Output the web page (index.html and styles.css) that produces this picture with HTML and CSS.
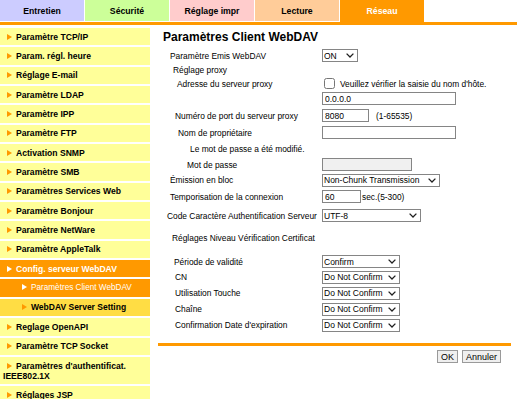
FILE: index.html
```html
<!DOCTYPE html>
<html lang="fr">
<head>
    <meta charset="UTF-8">
    <title>Paramètres Client WebDAV</title>
    <link rel="stylesheet" href="styles.css">
</head>
<body>
    <div class="tabs">
        <div class="tab tab-maint">Entretien</div>
        <div class="tab tab-sec">Sécurité</div>
        <div class="tab tab-print">Réglage impr</div>
        <div class="tab tab-read">Lecture</div>
        <div class="tab tab-active">Réseau</div>
    </div>
    <div class="tabline"></div>

    <div class="layout">
        <nav class="side">
            <div class="item">Paramètre TCP/IP</div>
            <div class="item">Param. régl. heure</div>
            <div class="item">Réglage E-mail</div>
            <div class="item">Paramètre LDAP</div>
            <div class="item">Paramètre IPP</div>
            <div class="item">Paramètre FTP</div>
            <div class="item">Activation SNMP</div>
            <div class="item">Paramètre SMB</div>
            <div class="item">Paramètres Services Web</div>
            <div class="item">Paramètre Bonjour</div>
            <div class="item">Paramètre NetWare</div>
            <div class="item">Paramètre AppleTalk</div>
            <div class="item item-open">Config. serveur WebDAV</div>
            <div class="item sub sub-current">Paramètres Client WebDAV</div>
            <div class="item sub sub-other">WebDAV Server Setting</div>
            <div class="item">Reglage OpenAPI</div>
            <div class="item">Paramètre TCP Socket</div>
            <div class="item">Paramètres d'authentificat.<br>IEEE802.1X</div>
            <div class="item">Réglages JSP</div>
        </nav>

        <main class="content">
            <h1>Paramètres Client WebDAV</h1>
            <div class="form">
                <div class="row h15">
                    <span class="label i5">Paramètre Emis WebDAV</span>
                    <span class="field"><select class="w36"><option>ON</option></select></span>
                </div>
                <div class="row h14">
                    <span class="label i8">Réglage proxy</span>
                </div>
                <div class="row h13">
                    <span class="label i12">Adresse du serveur proxy</span>
                    <span class="field"><input type="checkbox" class="check"> Veuillez vérifier la saisie du nom d'hôte.</span>
                </div>
                <div class="row h17">
                    <span class="label"></span>
                    <span class="field"><input type="text" class="w134" value="0.0.0.0"></span>
                </div>
                <div class="row h17">
                    <span class="label i10">Numéro de port du serveur proxy</span>
                    <span class="field"><input type="text" class="w47" value="8080"><span class="note">(1-65535)</span></span>
                </div>
                <div class="row h17">
                    <span class="label i13">Nom de propriétaire</span>
                    <span class="field"><input type="text" class="w134" value=""></span>
                </div>
                <div class="row h16">
                    <span class="label i25 wide">Le mot de passe a été modifié.</span>
                </div>
                <div class="row h15">
                    <span class="label i22">Mot de passe</span>
                    <span class="field"><input type="password" class="w90" disabled></span>
                </div>
                <div class="row h16">
                    <span class="label i5">Émission en bloc</span>
                    <span class="field"><select class="w118"><option>Non-Chunk Transmission</option></select></span>
                </div>
                <div class="row h17">
                    <span class="label i5">Temporisation de la connexion</span>
                    <span class="field"><input type="text" class="w39" value="60"><span class="unit">sec.(5-300)</span></span>
                </div>
                <div class="row h21">
                    <span class="label i2">Code Caractère Authentification Serveur</span>
                    <span class="field"><select class="w99"><option>UTF-8</option></select></span>
                </div>
                <div class="row h24 gap-after">
                    <span class="label i7 wide">Réglages Niveau Vérification Certificat</span>
                </div>
                <div class="row h15">
                    <span class="label i9">Période de validité</span>
                    <span class="field"><select class="w78"><option>Confirm</option></select></span>
                </div>
                <div class="row h16">
                    <span class="label i10">CN</span>
                    <span class="field"><select class="w78"><option>Do Not Confirm</option></select></span>
                </div>
                <div class="row h16">
                    <span class="label i10">Utilisation Touche</span>
                    <span class="field"><select class="w78"><option>Do Not Confirm</option></select></span>
                </div>
                <div class="row h16">
                    <span class="label i10">Chaîne</span>
                    <span class="field"><select class="w78"><option>Do Not Confirm</option></select></span>
                </div>
                <div class="row h16">
                    <span class="label i10">Confirmation Date d'expiration</span>
                    <span class="field"><select class="w78"><option>Do Not Confirm</option></select></span>
                </div>
            </div>
            <div class="rule"></div>
            <div class="buttons">
                <button>OK</button>
                <button>Annuler</button>
            </div>
        </main>
    </div>
</body>
</html>
```

FILE: styles.css
```css
:root {
    --orange: #ff9900;
    --yellow: #ffff99;
    --gold: #ffdd44;
}
body {
    font-family: "Liberation Sans", Arial, sans-serif;
    color: #000;
    background-color: #fff;
    margin: 0;
    padding: 0;
}
.tabs {
    display: flex;
    gap: 1px;
    height: 22px;
}
.tab {
    width: 84px;
    height: 21px;
    display: flex;
    align-items: center;
    justify-content: center;
    font-size: 8.7px;
    font-weight: bold;
}
.tab-maint { background-color: #ccccff; }
.tab-sec { background-color: #ccff99; }
.tab-print { background-color: #ffcccc; }
.tab-read { background-color: #ffcc99; }
.tab-active {
    height: 22px;
    background-color: var(--orange);
    color: #fff;
}
.tabline {
    height: 3px;
    background-color: var(--orange);
}
.layout {
    display: flex;
    gap: 8px;
}
.side {
    width: 150px;
    flex-shrink: 0;
    margin-top: 3px;
    display: flex;
    flex-direction: column;
}
.item {
    background-color: var(--yellow);
    border-bottom: 2px solid #fff;
    padding: 3.675px 3px;
    line-height: 10px;
    font-size: 8.6px;
    font-weight: bold;
    white-space: nowrap;
}
.item::before {
    content: "";
    display: inline-block;
    border-left: 5px solid var(--orange);
    border-top: 3px solid transparent;
    border-bottom: 3px solid transparent;
    margin: 0 4px 0 4px;
    vertical-align: 0;
}
.item-open {
    background-color: var(--orange);
    color: #fff;
}
.item-open::before { border-left-color: #fff; }
.sub::before { margin-left: 19px; }
.sub-current {
    background-color: var(--orange);
    color: #fff;
    font-weight: normal;
    font-size: 8.2px;
}
.sub-current::before { border-left-color: #fff; }
.sub-other {
    background-color: var(--gold);
    font-size: 8.5px;
}
.content {
    width: 353px;
    padding-top: 5px;
}
.content h1 {
    margin: 0 0 4px 5px;
    font-size: 12px;
    line-height: 14px;
}
.form {
    display: flex;
    flex-direction: column;
    font-size: 8.4px;
}
.row {
    display: grid;
    grid-template-columns: 157px 1fr;
    align-items: center;
    padding-left: 7px;
    white-space: nowrap;
}
.h13 { height: 13px; }
.h14 { height: 14px; }
.h15 { height: 15px; }
.h16 { height: 16px; }
.h17 { height: 17px; }
.h21 { height: 21px; }
.h24 { height: 24px; }
.gap-after { margin-bottom: 4px; }
.label.wide { grid-column: 1 / 3; }
.i2 { padding-left: 2px; }
.i5 { padding-left: 5px; }
.i7 { padding-left: 7px; }
.i8 { padding-left: 8px; }
.i9 { padding-left: 9px; }
.i10 { padding-left: 10px; }
.i12 { padding-left: 12px; }
.i13 { padding-left: 13px; }
.i22 { padding-left: 22px; }
.i25 { padding-left: 25px; }
.field {
    display: flex;
    align-items: center;
}
input, select {
    box-sizing: border-box;
    height: 13px;
    margin: 0;
    padding: 0 2px;
    border: 1px solid #858585;
    border-radius: 0;
    font-family: "Liberation Sans", Arial, sans-serif;
    font-size: 8.5px;
    background-color: #fff;
    color: #000;
}
select {
    appearance: none;
    -webkit-appearance: none;
    padding: 0 12px 0 1px;
    background-image: url("data:image/svg+xml,%3Csvg xmlns='http://www.w3.org/2000/svg' width='8' height='5'%3E%3Cpath d='M0.6 0.6 L4 4 L7.4 0.6' fill='none' stroke='%23202020' stroke-width='1.3'/%3E%3C/svg%3E");
    background-repeat: no-repeat;
    background-position: right 3px center;
}
input:disabled { background-color: #f0f0f0; }
.check {
    width: 11px;
    height: 11px;
    margin: 0 5px 0 2px;
}
.w36 { width: 36px; }
.w39 { width: 39px; }
.w47 { width: 47px; }
.w78 { width: 78px; }
.w90 { width: 90px; }
.w99 { width: 99px; }
.w118 { width: 118px; }
.w134 { width: 134px; }
.note { margin-left: 7px; }
.unit { margin-left: 1px; }
.rule {
    height: 3px;
    margin-top: 10px;
    background-color: var(--orange);
}
.buttons {
    display: flex;
    justify-content: flex-end;
    gap: 4px;
    margin: 4px 10px 0 0;
}
.buttons button {
    height: 13px;
    padding: 0 3px;
    font-family: "Liberation Sans", Arial, sans-serif;
    font-size: 9px;
    border: 1px solid #9a9a9a;
    border-radius: 0;
    background-color: #efefef;
}
```
